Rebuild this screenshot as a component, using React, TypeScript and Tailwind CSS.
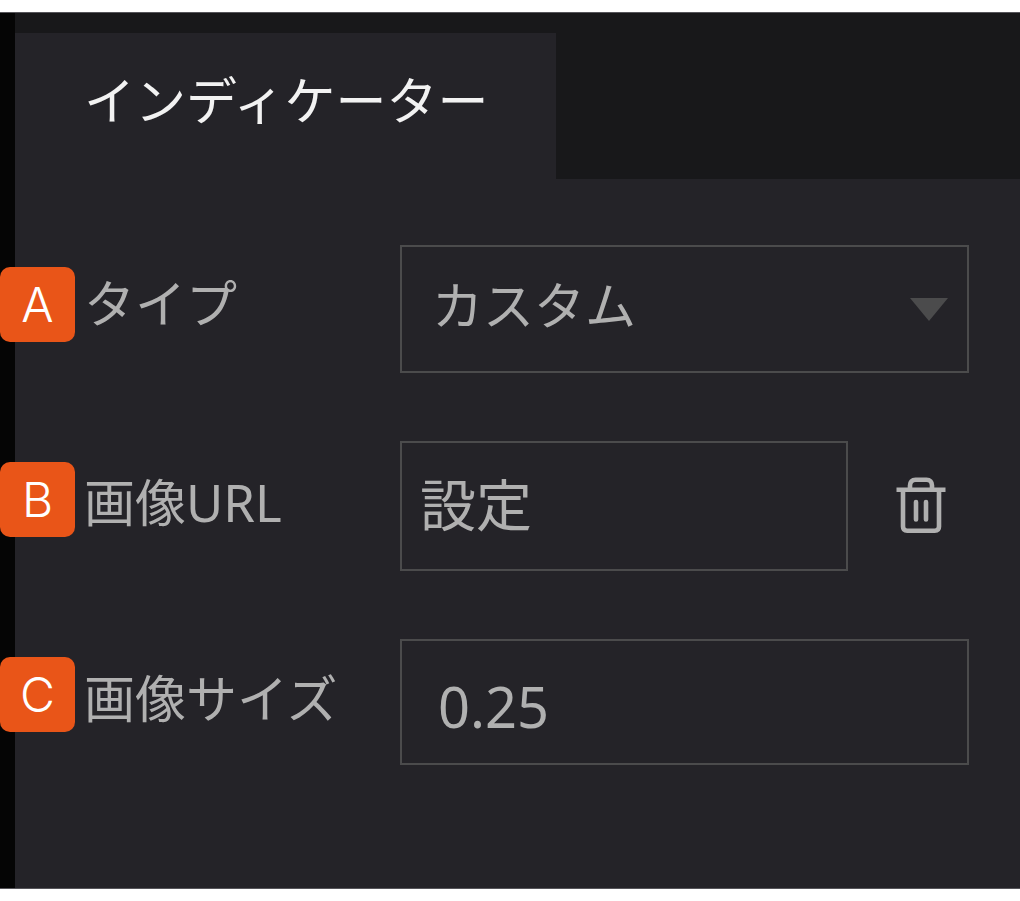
import { useState } from "react";

const BADGES = ["A", "B", "C"];

function TrashIcon() {
  return (
    <svg
      viewBox="0 0 52 58"
      className="h-[58px] w-[52px]"
      fill="none"
      stroke="#b0b0b0"
      strokeWidth="4.6"
      strokeLinecap="round"
      aria-hidden="true"
    >
      <path d="M1.500 12.800H50.500" strokeLinecap="butt" strokeWidth="4.600" />
      <path d="M15 12V8.500C15 5 17 2.800 20.500 2.800H31.500C35 2.800 37 5 37 8.500V12" />
      <path d="M8 14V49.500C8 52.200 9.500 53.700 12.200 53.700H39.800C42.500 53.700 44 52.200 44 49.500V14" />
      <path d="M21 25V42.500M31 25V42.500" />
    </svg>
  );
}

export default function App() {
  const [type, setType] = useState("custom");
  const [size, setSize] = useState("0.25");

  return (
    <div className="min-h-screen bg-white py-3 font-['Noto_Sans','Noto_Sans_CJK_JP',sans-serif]">
      <main className="relative border-y border-[#56555a] bg-[#050505] pl-[15px]">
        <header className="flex bg-[#18181a] pt-5" role="tablist">
          <button
            type="button"
            role="tab"
            aria-selected="true"
            className="h-[146px] bg-[#242328] pb-3 pl-[69px] pr-[68px] text-[51px] leading-none text-[#f2f2f2]"
          >
            インディケーター
          </button>
        </header>

        <form className="flex flex-col gap-[68px] bg-[#242328] pb-[123px] pl-[69px] pr-[51px] pt-[66px] text-[51px] text-[#b0b0b0]">
          <div className="flex items-center">
            <label htmlFor="type" className="w-[316px] shrink-0 pb-3 leading-none">
              タイプ
            </label>
            <div className="relative flex-1">
              <select
                id="type"
                value={type}
                onChange={(e) => setType(e.target.value)}
                className="block h-32 w-full appearance-none border-2 border-[#4b4b4c] bg-transparent pb-2 pl-[30px] text-[51px] outline-none"
              >
                <option value="custom">カスタム</option>
              </select>
              <svg
                viewBox="0 0 38 23"
                className="pointer-events-none absolute right-[21px] top-[53px] h-[23px] w-[38px]"
                aria-hidden="true"
              >
                <path d="M0 0H38L19 23Z" fill="#4b4b4c" />
              </svg>
            </div>
          </div>

          <div className="flex items-center">
            <label htmlFor="image-url" className="w-[316px] shrink-0 pb-2 leading-none">
              画像URL
            </label>
            <button
              id="image-url"
              type="button"
              className="h-[130px] flex-1 border-2 border-[#4b4b4c] pb-1 pl-[18px] text-left text-[56px] leading-none"
            >
              設定
            </button>
            <button type="button" aria-label="削除" className="ml-[47px] mr-[22px] shrink-0">
              <TrashIcon />
            </button>
          </div>

          <div className="flex items-center">
            <label htmlFor="image-size" className="w-[316px] shrink-0 pb-2 leading-none">
              画像サイズ
            </label>
            <input
              id="image-size"
              type="text"
              value={size}
              onChange={(e) => setSize(e.target.value)}
              className="h-[126px] min-w-0 flex-1 border-2 border-[#4b4b4c] bg-transparent pl-[36px] pt-2 text-[56px] outline-none"
            />
          </div>
        </form>

        <div className="absolute left-0 top-[254px] flex flex-col gap-[120px]">
          {BADGES.map((letter) => (
            <span
              key={letter}
              className="flex size-[75px] items-center justify-center rounded-[10px] bg-[#e95518] font-['Inter',sans-serif] text-[48px] font-[360] leading-none text-white"
            >
              {letter}
            </span>
          ))}
        </div>
      </main>
    </div>
  );
}
